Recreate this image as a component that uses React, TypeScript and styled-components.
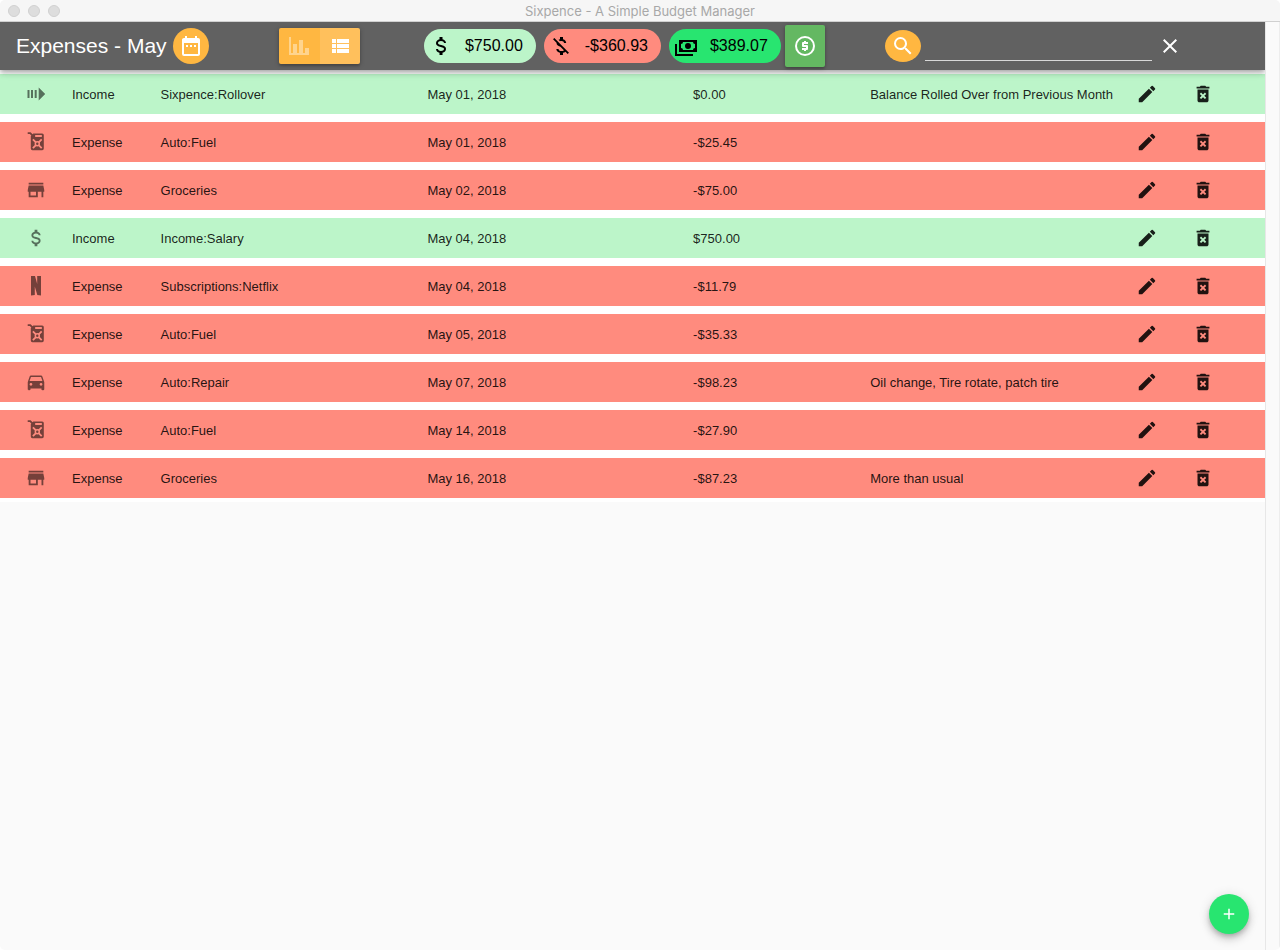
import React from "react";
import styled, { createGlobalStyle } from "styled-components";
import {
  MdAdd,
  MdClose,
  MdDateRange,
  MdDeleteForever,
  MdDirectionsCar,
  MdEdit,
  MdMoneyOff,
  MdStore,
} from "react-icons/md";

const colors = {
  page: "#fafafa",
  bar: "#616161",
  amber: "#ffb741",
  amberActive: "#ffc05c",
  income: "#bcf5c9",
  expense: "#ff8b7e",
  total: "#28e570",
  coin: "#64b862",
};

const GlobalStyle = createGlobalStyle`
  *, *::before, *::after { box-sizing: border-box; }
  body {
    margin: 0;
    background: #fff;
    font-family: "Liberation Sans", Arial, sans-serif;
    color: rgba(0, 0, 0, 0.87);
  }
  button, input { font: inherit; color: inherit; }
`;

const Window = styled.div`
  display: flex;
  flex-direction: column;
  min-height: 100vh;
  background: ${colors.page};
  border-radius: 5px;
  overflow: hidden;
`;

const TitleBar = styled.header`
  position: relative;
  display: flex;
  align-items: center;
  justify-content: center;
  height: 22px;
  background: #f6f6f6;
  border-bottom: 1px solid #d0d0d0;
`;

const WindowTitle = styled.span`
  font-family: Inter, "Liberation Sans", sans-serif;
  font-size: 13px;
  line-height: 20px;
  color: #a8a8a8;
`;

const WindowControls = styled.div`
  position: absolute;
  left: 8px;
  top: 5px;
  display: flex;
  gap: 8px;
`;

const WindowDot = styled.span`
  width: 12px;
  height: 12px;
  border-radius: 50%;
  background: #dddddd;
  border: 1px solid #d0d0d0;
`;

const Frame = styled.div`
  flex: 1;
  display: flex;
`;

const Content = styled.main`
  flex: 1;
  min-width: 0;
`;

const ScrollTrack = styled.div`
  width: 15px;
  border-left: 1px solid #e7e7e7;
  border-right: 1px solid #ededed;
`;

const Toolbar = styled.div`
  position: relative;
  z-index: 1;
  display: flex;
  align-items: center;
  justify-content: space-between;
  height: 48px;
  padding: 0 83px 0 16px;
  background: ${colors.bar};
  box-shadow: 0 2px 4px -1px rgba(0, 0, 0, 0.2), 0 4px 5px rgba(0, 0, 0, 0.14),
    0 1px 10px rgba(0, 0, 0, 0.12);
  clip-path: inset(0 0 -16px 0);
`;

const Group = styled.div`
  display: flex;
  align-items: center;
`;

const TitleGroup = styled(Group)`
  gap: 6px;
  margin-right: 10px;
`;

const Heading = styled.h1`
  margin: 0;
  font-size: 21px;
  font-weight: 400;
  line-height: 24px;
  color: #fff;
  white-space: nowrap;
`;

const IconButton = styled.button`
  display: inline-flex;
  align-items: center;
  justify-content: center;
  flex: none;
  padding: 0;
  border: 0;
  background: none;
  cursor: pointer;
`;

const RoundButton = styled(IconButton)<{ $height: number }>`
  width: 36px;
  height: ${(p) => p.$height}px;
  border-radius: 50%;
  background: ${colors.amber};
  color: #fff;
`;

const Toggle = styled(Group)`
  border-radius: 2px;
  overflow: hidden;
  box-shadow: 0 1px 5px rgba(0, 0, 0, 0.25), 0 2px 2px rgba(0, 0, 0, 0.14);
`;

const ToggleButton = styled(IconButton)<{ $active?: boolean }>`
  width: ${(p) => (p.$active ? 40 : 41)}px;
  height: 36px;
  background: ${(p) => (p.$active ? colors.amberActive : colors.amber)};
  color: ${(p) => (p.$active ? "#fff" : "rgba(255, 255, 255, 0.4)")};
`;

const Chips = styled(Group)`
  gap: 8px;
  margin-left: 4px;
`;

const Chip = styled.span<{ $color: string }>`
  display: inline-flex;
  align-items: center;
  gap: 8px;
  height: 34px;
  padding: 0 13px 0 1px;
  border-radius: 17px;
  background: ${(p) => p.$color};
  color: #000;
  font-size: 16px;
  line-height: 20px;
  white-space: nowrap;
`;

const ChipIcon = styled.span`
  display: flex;
  justify-content: center;
  width: 32px;
`;

const CoinButton = styled(IconButton)`
  width: 40px;
  height: 42px;
  margin-left: -4px;
  border-radius: 2px;
  background: ${colors.coin};
  color: #fff;
  box-shadow: 0 1px 5px rgba(0, 0, 0, 0.25), 0 2px 2px rgba(0, 0, 0, 0.14);
`;

const SearchGroup = styled(Group)`
  color: #fff;
`;

const SearchInput = styled.input`
  width: 227px;
  height: 30px;
  margin: 0 6px 0 4px;
  padding: 0;
  border: 0;
  border-bottom: 1px solid #d8d8d8;
  background: transparent;
  font-size: 16px;
  outline: none;
`;

const Table = styled.table`
  width: 100%;
  table-layout: fixed;
  border-spacing: 0;
  background: #fff;
`;

const Col = styled.col<{ $width?: string }>`
  width: ${(p) => p.$width ?? "auto"};
`;

const Row = styled.tr<{ $income: boolean }>`
  height: 48px;
  background: ${(p) => (p.$income ? colors.income : colors.expense)};
`;

const Cell = styled.td`
  padding: 2px 0 0;
  border: solid #fff;
  border-width: 4px 0;
  font-size: 13px;
  line-height: 16px;
  white-space: nowrap;
`;

const IconCell = styled(Cell)`
  padding: 0;
  text-align: center;
  line-height: 0;
`;

const CategoryIcon = styled.span`
  color: rgba(0, 0, 0, 0.54);
`;

const AddButton = styled(IconButton)`
  position: fixed;
  right: 31px;
  bottom: 16px;
  width: 40px;
  height: 40px;
  border-radius: 50%;
  background: ${colors.total};
  color: #fff;
  box-shadow: 0 3px 5px -1px rgba(0, 0, 0, 0.2), 0 6px 10px rgba(0, 0, 0, 0.14),
    0 1px 12px rgba(0, 0, 0, 0.12);
`;

const Glyph = ({ d, size = 24 }: { d: string; size?: number }) => (
  <svg width={size} height={size} viewBox="0 0 24 24" fill="currentColor" fillRule="evenodd" aria-hidden="true">
    <path d={d} />
  </svg>
);

const ChartIcon = () => <Glyph d="M22,21H2V3H4V19H6V10H10V19H12V6H16V19H18V14H22V21Z" />;

const ListIcon = () => (
  <Glyph d="M9,5V9H21V5ZM9,19H21V15H9ZM9,14H21V10H9ZM4,9H8V5H4ZM4,19H8V15H4ZM4,14H8V10H4Z" />
);

const SearchIcon = () => (
  <Glyph d="M9.5,3A6.5,6.5 0 0,1 16,9.5C16,11.11 15.41,12.59 14.44,13.73L14.71,14H15.5L20.5,19L19,20.5L14,15.5V14.71L13.73,14.44C12.59,15.41 11.11,16 9.5,16A6.5,6.5 0 0,1 3,9.5A6.5,6.5 0 0,1 9.5,3M9.5,5C7,5 5,7 5,9.5C5,12 7,14 9.5,14C12,14 14,12 14,9.5C14,7 12,5 9.5,5Z" />
);

const DollarIcon = ({ size }: { size?: number }) => (
  <Glyph
    size={size}
    d="M7,15H9C9,16.08 10.37,17 12,17C13.63,17 15,16.08 15,15C15,13.9 13.96,13.5 11.76,12.97C9.64,12.44 7,11.78 7,9C7,7.21 8.47,5.69 10.5,5.18V3H13.5V5.18C15.53,5.69 17,7.21 17,9H15C15,7.92 13.63,7 12,7C10.37,7 9,7.92 9,9C9,10.1 10.04,10.5 12.24,11.03C14.36,11.56 17,12.22 17,15C17,16.79 15.53,18.31 13.5,18.82V21H10.5V18.82C8.47,18.31 7,16.79 7,15Z"
  />
);

const CoinIcon = () => (
  <Glyph d="M12,2A10,10 0 0,1 22,12A10,10 0 0,1 12,22A10,10 0 0,1 2,12A10,10 0 0,1 12,2M12,4A8,8 0 0,0 4,12A8,8 0 0,0 12,20A8,8 0 0,0 20,12A8,8 0 0,0 12,4M11,17V16H9V14H13V13H10A1,1 0 0,1 9,12V9A1,1 0 0,1 10,8H11V7H13V8H15V10H11V11H14A1,1 0 0,1 15,12V15A1,1 0 0,1 14,16H13V17H11Z" />
);

const CashIcon = () => (
  <Glyph d="M5,6H23V18H5V6M14,9A3,3 0 0,1 17,12A3,3 0 0,1 14,15A3,3 0 0,1 11,12A3,3 0 0,1 14,9M9,8A2,2 0 0,1 7,10V14A2,2 0 0,1 9,16H19A2,2 0 0,1 21,14V10A2,2 0 0,1 19,8H9M1,10H3V20H19V22H1V10Z" />
);

const RolloverIcon = () => <Glyph d="M3.5,8H5.5V16H3.5ZM7,8H9V16H7ZM10.7,8H12.7V16H10.7ZM14.7,5.5L21.2,12L14.7,18.5Z" />;

const NetflixIcon = () => <Glyph d="M7,2H11L13.2,10V2H17V21.5L13.3,21L10.8,12.5V21L7,21.5Z" />;

const GasCanIcon = () => (
  <svg width="24" height="24" viewBox="0 0 24 24" aria-hidden="true">
    <mask id="can-cutout">
      <rect width="24" height="24" fill="#fff" />
      <rect x="11" y="5" width="7" height="2" rx="0.8" fill="#000" />
      <path d="M8.9,9.4L17.7,18.2M17.7,9.4L8.9,18.2" stroke="#000" strokeWidth="1.8" />
      <circle cx="13.3" cy="13.8" r="2.7" fill="#000" />
      <circle cx="13.3" cy="13.8" r="1.2" fill="#fff" />
    </mask>
    <path
      d="M3.7,2.2H6.6L8.6,4.2L9.3,3.5H18.2A1.6,1.6 0 0,1 19.8,5.1V18.6A1.6,1.6 0 0,1 18.2,20.2H8.4A1.6,1.6 0 0,1 6.8,18.6V6.2L7.3,5.6L5.8,4.1H3.7Z"
      fill="currentColor"
      mask="url(#can-cutout)"
    />
  </svg>
);

const icons = {
  rollover: <RolloverIcon />,
  fuel: <GasCanIcon />,
  store: <MdStore size={22} />,
  salary: <DollarIcon size={22} />,
  netflix: <NetflixIcon />,
  car: <MdDirectionsCar size={22} />,
};

type Entry = {
  icon: keyof typeof icons;
  type: "Income" | "Expense";
  category: string;
  date: string;
  amount: string;
  note?: string;
};

const entries: Entry[] = [
  { icon: "rollover", type: "Income", category: "Sixpence:Rollover", date: "May 01, 2018", amount: "$0.00", note: "Balance Rolled Over from Previous Month" },
  { icon: "fuel", type: "Expense", category: "Auto:Fuel", date: "May 01, 2018", amount: "-$25.45" },
  { icon: "store", type: "Expense", category: "Groceries", date: "May 02, 2018", amount: "-$75.00" },
  { icon: "salary", type: "Income", category: "Income:Salary", date: "May 04, 2018", amount: "$750.00" },
  { icon: "netflix", type: "Expense", category: "Subscriptions:Netflix", date: "May 04, 2018", amount: "-$11.79" },
  { icon: "fuel", type: "Expense", category: "Auto:Fuel", date: "May 05, 2018", amount: "-$35.33" },
  { icon: "car", type: "Expense", category: "Auto:Repair", date: "May 07, 2018", amount: "-$98.23", note: "Oil change, Tire rotate, patch tire" },
  { icon: "fuel", type: "Expense", category: "Auto:Fuel", date: "May 14, 2018", amount: "-$27.90" },
  { icon: "store", type: "Expense", category: "Groceries", date: "May 16, 2018", amount: "-$87.23", note: "More than usual" },
];

const columnWidths = ["72px", "7%", "21.1%", "21%", "14%", undefined, "56px", "56px", "34px"];

export default function App() {
  return (
    <Window>
      <GlobalStyle />
      <TitleBar>
        <WindowControls>
          <WindowDot />
          <WindowDot />
          <WindowDot />
        </WindowControls>
        <WindowTitle>Sixpence - A Simple Budget Manager</WindowTitle>
      </TitleBar>
      <Frame>
        <Content>
          <Toolbar>
            <TitleGroup>
              <Heading>Expenses - May</Heading>
              <RoundButton $height={36} aria-label="Choose month">
                <MdDateRange size={24} />
              </RoundButton>
            </TitleGroup>
            <Toggle role="group" aria-label="View">
              <ToggleButton aria-label="Chart view" aria-pressed={false}>
                <ChartIcon />
              </ToggleButton>
              <ToggleButton $active aria-label="List view" aria-pressed>
                <ListIcon />
              </ToggleButton>
            </Toggle>
            <Chips>
              <Chip $color={colors.income}>
                <ChipIcon><DollarIcon /></ChipIcon>
                $750.00
              </Chip>
              <Chip $color={colors.expense}>
                <ChipIcon><MdMoneyOff size={24} /></ChipIcon>
                -$360.93
              </Chip>
              <Chip $color={colors.total}>
                <ChipIcon><CashIcon /></ChipIcon>
                $389.07
              </Chip>
              <CoinButton aria-label="Roll over balance">
                <CoinIcon />
              </CoinButton>
            </Chips>
            <SearchGroup role="search">
              <RoundButton $height={32} aria-label="Search">
                <SearchIcon />
              </RoundButton>
              <SearchInput type="text" aria-label="Search expenses" />
              <IconButton aria-label="Clear search">
                <MdClose size={24} />
              </IconButton>
            </SearchGroup>
          </Toolbar>
          <Table>
            <colgroup>
              {columnWidths.map((width, i) => (
                <Col key={i} $width={width} />
              ))}
            </colgroup>
            <tbody>
              {entries.map((entry, i) => (
                <Row key={i} $income={entry.type === "Income"}>
                  <IconCell>
                    <CategoryIcon>{icons[entry.icon]}</CategoryIcon>
                  </IconCell>
                  <Cell>{entry.type}</Cell>
                  <Cell>{entry.category}</Cell>
                  <Cell>{entry.date}</Cell>
                  <Cell>{entry.amount}</Cell>
                  <Cell>{entry.note}</Cell>
                  <IconCell>
                    <IconButton aria-label={`Edit ${entry.category}`}>
                      <MdEdit size={22} />
                    </IconButton>
                  </IconCell>
                  <IconCell>
                    <IconButton aria-label={`Delete ${entry.category}`}>
                      <MdDeleteForever size={22} />
                    </IconButton>
                  </IconCell>
                  <Cell />
                </Row>
              ))}
            </tbody>
          </Table>
        </Content>
        <ScrollTrack />
      </Frame>
      <AddButton aria-label="Add entry">
        <MdAdd size={18} />
      </AddButton>
    </Window>
  );
}
